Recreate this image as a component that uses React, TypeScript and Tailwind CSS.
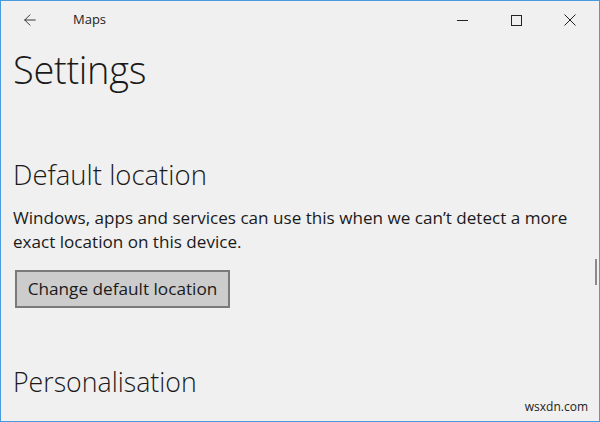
import { ArrowLeft } from "lucide-react"

export default function App() {
  return (
    <div
      className="relative h-[422px] w-[600px] overflow-hidden border border-[#4a9ae0] bg-[#f0f0f0] text-[#1a1a1a]"
      style={{ fontFamily: '"Open Sans", "Noto Sans", sans-serif' }}
    >
      <div className="flex h-[38px] items-center">
        <div className="flex w-[58px] justify-center">
          <ArrowLeft className="h-[18px] w-[18px] text-[#222]" strokeWidth={1.2} />
        </div>
        <span className="ml-[14px] text-[13px] text-[#222]">Maps</span>
        <div className="ml-auto flex h-full pr-[2px]">
          <div className="flex w-[54px] items-center justify-center">
            <div className="h-px w-[11px] bg-[#222]" />
          </div>
          <div className="flex w-[54px] items-center justify-center">
            <div className="h-[11px] w-[11px] border border-[#222]" />
          </div>
          <div className="flex w-[54px] items-center justify-center">
            <svg width="12" height="12" viewBox="0 0 12 12" className="text-[#222]">
              <path d="M0.5 0.5 L11.5 11.5 M11.5 0.5 L0.5 11.5" stroke="currentColor" strokeWidth="1" />
            </svg>
          </div>
        </div>
      </div>

      <div className="px-3">
        <h1 className="mt-[4px] text-[38px] font-light leading-[52px] tracking-[-0.3px]">Settings</h1>

        <h2 className="mt-[63px] text-[27.5px] font-light leading-[34px]">Default location</h2>
        <p className="mt-[14px] whitespace-nowrap text-[17.1px] leading-[24px]">
          Windows, apps and services can use this when we can’t detect a more
          <br />
          exact location on this device.
        </p>
        <button className="ml-[2px] mt-[16px] h-[38px] w-[215px] border-2 border-[#7a7a7a] bg-[#cccccc] text-[17.2px] text-[#1a1a1a]">
          Change default location
        </button>

        <h2 className="mt-[57px] text-[26.7px] font-light leading-[34px]">Personalisation</h2>
      </div>

      <div className="absolute right-[2px] top-[258px] h-[26px] w-[2px] bg-[#8a8a8a]" />
      <span className="absolute bottom-[5px] right-[11px] text-[12px] text-[#222]">wsxdn.com</span>
    </div>
  )
}
